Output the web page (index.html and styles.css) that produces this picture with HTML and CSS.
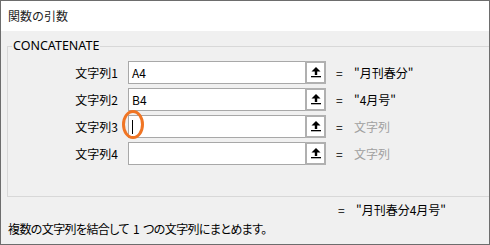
FILE: index.html
```html
<!DOCTYPE html>
<html lang="ja">
<head>
<meta charset="utf-8">
<title>関数の引数</title>
<link rel="stylesheet" href="styles.css">
</head>
<body>
<div class="window">
  <div class="titlebar">関数の引数</div>
  <div class="content">
    <fieldset class="group">
      <legend class="legend">CONCATENATE</legend>
      <div class="row">
        <span class="label">文字列1</span>
        <div class="field"><span class="fieldtext">A4</span></div>
        <div class="btn"><svg class="icon" width="10" height="11" viewBox="0 0 10 11"><path d="M5 0 L9.5 4.5 L0.5 4.5 Z" fill="#000"/><rect x="3.8" y="4" width="2.4" height="4" fill="#000"/><rect x="0" y="9" width="10" height="1.3" fill="#000"/></svg></div>
        <span class="eq">=</span>
        <span class="val">"月刊春分"</span>
      </div>
      <div class="row">
        <span class="label">文字列2</span>
        <div class="field"><span class="fieldtext">B4</span></div>
        <div class="btn"><svg class="icon" width="10" height="11" viewBox="0 0 10 11"><path d="M5 0 L9.5 4.5 L0.5 4.5 Z" fill="#000"/><rect x="3.8" y="4" width="2.4" height="4" fill="#000"/><rect x="0" y="9" width="10" height="1.3" fill="#000"/></svg></div>
        <span class="eq">=</span>
        <span class="val">"4月号"</span>
      </div>
      <div class="row">
        <span class="label">文字列3</span>
        <div class="field"><span class="caret"></span><span class="mark"></span></div>
        <div class="btn"><svg class="icon" width="10" height="11" viewBox="0 0 10 11"><path d="M5 0 L9.5 4.5 L0.5 4.5 Z" fill="#000"/><rect x="3.8" y="4" width="2.4" height="4" fill="#000"/><rect x="0" y="9" width="10" height="1.3" fill="#000"/></svg></div>
        <span class="eq">=</span>
        <span class="val placeholder">文字列</span>
      </div>
      <div class="row">
        <span class="label">文字列4</span>
        <div class="field"></div>
        <div class="btn"><svg class="icon" width="10" height="11" viewBox="0 0 10 11"><path d="M5 0 L9.5 4.5 L0.5 4.5 Z" fill="#000"/><rect x="3.8" y="4" width="2.4" height="4" fill="#000"/><rect x="0" y="9" width="10" height="1.3" fill="#000"/></svg></div>
        <span class="eq">=</span>
        <span class="val placeholder">文字列</span>
      </div>
    </fieldset>
    <div class="result">
      <span class="eq">=</span>
      <span class="val">"月刊春分4月号"</span>
    </div>
    <div class="desc">複数の文字列を結合して 1 つの文字列にまとめます。</div>
  </div>
</div>
</body>
</html>
```

FILE: styles.css
```css
html, body {
  margin: 0;
  padding: 0;
  background: #ffffff;
}
body {
  font-family: "Noto Sans CJK JP", "Noto Sans", sans-serif;
  font-size: 12px;
  line-height: 16px;
  color: #000;
}
.window {
  width: 490px;
  height: 245px;
  box-sizing: border-box;
  border: 1px solid #6d6d6d;
  background: #f0f0f0;
  overflow: hidden;
}
.titlebar {
  height: 30px;
  background: #ffffff;
  padding-left: 7px;
  line-height: 30px;
  color: #1b1b1b;
}
.content {
  padding-top: 7px;
}
.group {
  margin: 0 -30px 0 6px;
  padding: 7px 0 31px 0;
  border: 1px solid #d8d8d8;
  min-width: 0;
}
.legend {
  padding: 0 1px;
  margin-left: 4px;
  line-height: 16px;
  font-family: "Noto Sans", "Noto Sans CJK JP", sans-serif;
  font-size: 12.5px;
}
.row {
  display: flex;
  align-items: center;
  height: 23px;
  margin-bottom: 4px;
}
.row:last-child {
  margin-bottom: 0;
}
.label {
  width: 110px;
  text-align: right;
  margin-right: 10px;
}
.field {
  position: relative;
  width: 177px;
  height: 23px;
  box-sizing: border-box;
  border: 1px solid #a8a8a8;
  border-right: none;
  background: #fff;
  display: flex;
  align-items: center;
  padding-left: 3px;
}
.caret {
  width: 1px;
  height: 14px;
  background: #000;
}
.mark {
  position: absolute;
  left: -7px;
  top: -6px;
  width: 16px;
  height: 23px;
  border: 3px solid #f07524;
  border-radius: 50%;
}
.btn {
  width: 21px;
  height: 23px;
  box-sizing: border-box;
  border: 2px solid #b0b0b0;
  background: #fff;
  display: flex;
  align-items: center;
  justify-content: center;
}
.icon {
  display: block;
}
.eq {
  width: 18px;
  margin-left: 10px;
}
.placeholder {
  color: #a0a0a0;
}
.result {
  display: flex;
  margin-top: 5px;
  padding-left: 327px;
}
.desc {
  margin-top: 3px;
  padding-left: 7px;
  font-feature-settings: "palt";
  letter-spacing: -0.6px;
  word-spacing: 2px;
}
```
